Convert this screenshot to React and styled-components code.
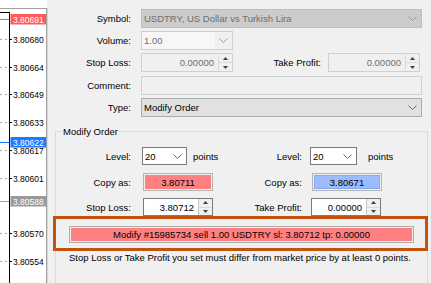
import React from 'react';
import styled, { createGlobalStyle } from 'styled-components';

const GlobalStyle = createGlobalStyle`
  body {
    margin: 0;
    background: #f0f0f0;
    font-family: "Liberation Sans", Arial, sans-serif;
    font-size: 9.5px;
    color: #000;
  }
`;

const Window = styled.div`
  display: flex;
  width: 431px;
  height: 283px;
  overflow: hidden;
  background: #f0f0f0;
`;

const ChartPane = styled.svg`
  flex: 0 0 49px;
  width: 49px;
  height: 283px;
  display: block;
  overflow: visible;
`;

const Dialog = styled.div`
  flex: 1;
  display: flex;
  flex-direction: column;
  padding-top: 9px;
`;

const Row = styled.div`
  display: flex;
  align-items: center;
  height: 19px;
  margin-bottom: ${p => p.mb ?? 3}px;
`;

const Label = styled.span`
  flex: 0 0 ${p => p.w ?? 82}px;
  text-align: right;
  margin-right: ${p => p.gap ?? 10}px;
  white-space: nowrap;
`;

const Field = styled.div`
  box-sizing: border-box;
  display: flex;
  align-items: center;
  width: ${p => p.w}px;
  height: ${p => p.h ?? 19}px;
  border: 1px solid ${p => (p.enabled ? '#7a7a7a' : '#d0d0d0')};
  background: ${p => p.bg ?? '#f0f0f0'};
  color: ${p => (p.enabled ? '#000' : '#6d6d6d')};
  padding-left: 2px;
  margin-left: ${p => p.ml ?? 0}px;
  overflow: hidden;
  white-space: nowrap;
`;

const Value = styled.span`
  flex: 1;
  text-align: ${p => p.align ?? 'left'};
  padding-right: ${p => (p.align === 'right' ? 4 : 0)}px;
`;

const Chevron = styled.span`
  flex: 0 0 17px;
  display: flex;
  align-items: center;
  justify-content: center;
  align-self: stretch;
  background: ${p => p.bg ?? 'transparent'};
`;

const Spin = styled.div`
  flex: 0 0 13px;
  align-self: stretch;
  display: flex;
  flex-direction: column;
  border-left: 1px solid ${p => (p.enabled ? '#c8c8c8' : '#dcdcdc')};
  background: #f0f0f0;
`;

const SpinHalf = styled.div`
  flex: 1;
  display: flex;
  align-items: center;
  justify-content: center;
  border-bottom: ${p => (p.top ? '1px solid #dcdcdc' : 'none')};
`;

const ColorBox = styled.div`
  box-sizing: border-box;
  width: 70px;
  height: 18px;
  margin-left: ${p => p.ml ?? 0}px;
  border: 1px solid #b4b4b4;
  padding: 1px;
  display: flex;
`;

const ColorFill = styled.div`
  flex: 1;
  background: ${p => p.color};
  display: flex;
  align-items: center;
  justify-content: center;
  border: 1px solid ${p => p.edge};
`;

const Group = styled.fieldset`
  margin: 9px 3px 0 6px;
  padding: 0;
  border: 1px solid #dcdcdc;
  border-bottom: none;
  min-width: 0;
  flex: 1;
  display: flex;
  flex-direction: column;
`;

const Legend = styled.legend`
  margin-left: 6px;
  padding: 0 1px;
`;

const GroupRow = styled.div`
  display: flex;
  align-items: center;
  height: 18px;
  margin-top: ${p => p.mt ?? 8}px;
`;

const Half = styled.div`
  display: flex;
  align-items: center;
  flex: 0 0 ${p => p.w}px;
`;

const Unit = styled.span`
  margin-left: 6px;
`;

const Highlight = styled.div`
  margin: 0 -1px 0 -3px;
  border: 3px solid #c4520f;
  height: 17px;
  box-sizing: content-box;
  padding: 7px 11px 5px 13px;
`;

const ModifyButton = styled.div`
  box-sizing: border-box;
  height: 17px;
  border: 1px solid #adadad;
  padding: 1px;
  display: flex;
`;

const ButtonFace = styled.div`
  flex: 1;
  background: #ff8080;
  display: flex;
  align-items: center;
  justify-content: center;
  white-space: nowrap;
`;

const Note = styled.div`
  margin: 1px 0 0 13px;
  white-space: nowrap;
`;

const ChevronIcon = ({ color = '#6a6a6a' }) => (
  <svg width="9" height="5" viewBox="0 0 9 5">
    <polyline points="0.5,0.5 4.5,4.5 8.5,0.5" fill="none" stroke={color} strokeWidth="1" />
  </svg>
);

const Arrow = ({ up }) => (
  <svg width="5" height="3" viewBox="0 0 5 3">
    <polygon points={up ? '0,3 5,3 2.5,0' : '0,0 5,0 2.5,3'} fill="#404040" />
  </svg>
);

const Spinner = ({ enabled }) => (
  <Spin enabled={enabled}>
    <SpinHalf top>
      <Arrow up />
    </SpinHalf>
    <SpinHalf>
      <Arrow />
    </SpinHalf>
  </Spin>
);

const ticks = [
  { y: 39, v: '3.80680' },
  { y: 67, v: '3.80664' },
  { y: 94, v: '3.80649' },
  { y: 122, v: '3.80633' },
  { y: 150, v: '3.80617' },
  { y: 178, v: '3.80601' },
  { y: 233, v: '3.80570' },
  { y: 261, v: '3.80554' },
];

const marks = [
  { y: 19, v: '3.80691', bg: '#ff5a5a', line: '#ff5a5a' },
  { y: 142, v: '3.80622', bg: '#1e7bff', line: '#1e7bff' },
  { y: 201, v: '3.80588', bg: '#9a9a9a', line: '#a0a0a0' },
];

const labelFont = 'Liberation Sans, Arial, sans-serif';

const Chart = () => (
  <ChartPane width="49" height="283" viewBox="0 0 49 283">
    <rect x="0" y="0" width="47" height="283" fill="#fff" />
    <line x1="0" y1="8.5" x2="47" y2="8.5" stroke="#a0a0a0" />
    <line x1="46.5" y1="8" x2="46.5" y2="283" stroke="#a0a0a0" />
    <line x1="47.5" y1="8" x2="47.5" y2="283" stroke="#d8d8d8" />
    <line x1="0" y1="12.5" x2="9.5" y2="12.5" stroke="#000" />
    <line x1="9.5" y1="12" x2="9.5" y2="283" stroke="#000" />
    {ticks.map(t => (
      <g key={t.v}>
        <line x1="0" y1={t.y + 0.5} x2="8" y2={t.y + 0.5} stroke="#a8a8a8" strokeDasharray="2 3" />
        <line x1="9" y1={t.y + 0.5} x2="12" y2={t.y + 0.5} stroke="#000" />
        <text x="13" y={t.y + 3.5} fontSize="8.5" fontFamily={labelFont} fill="#000">
          {t.v}
        </text>
      </g>
    ))}
    {marks.map(m => (
      <g key={m.v}>
        <line x1="0" y1={m.y + 0.5} x2="9" y2={m.y + 0.5} stroke={m.line} />
        <rect x="10.5" y={m.y - 5} width="35.5" height="10.5" fill={m.bg} />
        <text x="13" y={m.y + 3.5} fontSize="8.5" fontFamily={labelFont} fill="#fff">
          {m.v}
        </text>
      </g>
    ))}
  </ChartPane>
);

export default function App() {
  return (
    <>
      <GlobalStyle />
      <Window>
        <Chart />
        <Dialog>
          <Row>
            <Label>Symbol:</Label>
            <Field w={281} bg="#cccccc" style={{ borderColor: '#bfbfbf' }}>
              <Value>USDTRY, US Dollar vs Turkish Lira</Value>
              <Chevron>
                <ChevronIcon color="#9a9a9a" />
              </Chevron>
            </Field>
          </Row>
          <Row>
            <Label>Volume:</Label>
            <Field w={92} bg="#f7f7f7">
              <Value>1.00</Value>
              <Chevron bg="#f0f0f0">
                <ChevronIcon color="#a0a0a0" />
              </Chevron>
            </Field>
          </Row>
          <Row mb={4}>
            <Label>Stop Loss:</Label>
            <Field w={92} style={{ paddingLeft: 0 }}>
              <Value align="right">0.00000</Value>
              <Spinner />
            </Field>
            <Label w={88} gap={7}>Take Profit:</Label>
            <Field w={92} style={{ paddingLeft: 0 }}>
              <Value align="right">0.00000</Value>
              <Spinner />
            </Field>
          </Row>
          <Row>
            <Label>Comment:</Label>
            <Field w={281} />
          </Row>
          <Row mb={0}>
            <Label>Type:</Label>
            <Field w={281} enabled bg="#e1e1e1" style={{ borderColor: '#adadad' }}>
              <Value>Modify Order</Value>
              <Chevron>
                <ChevronIcon />
              </Chevron>
            </Field>
          </Row>
          <Group>
            <Legend>Modify Order</Legend>
            <GroupRow mt={10}>
              <Half w={171}>
                <Label w={75} gap={11}>Level:</Label>
                <Field w={45} h={18} enabled bg="#fff">
                  <Value>20</Value>
                  <Chevron>
                    <ChevronIcon />
                  </Chevron>
                </Field>
                <Unit>points</Unit>
              </Half>
              <Half w={180}>
                <Label w={75} gap={8}>Level:</Label>
                <Field w={47} h={18} enabled bg="#fff">
                  <Value>20</Value>
                  <Chevron>
                    <ChevronIcon />
                  </Chevron>
                </Field>
                <Unit style={{ marginLeft: 11 }}>points</Unit>
              </Half>
            </GroupRow>
            <GroupRow>
              <Half w={171}>
                <Label w={75} gap={11}>Copy as:</Label>
                <ColorBox ml={1}>
                  <ColorFill color="#ff8080" edge="#ff8080">3.80711</ColorFill>
                </ColorBox>
              </Half>
              <Half w={180}>
                <Label w={75} gap={8}>Copy as:</Label>
                <ColorBox ml={2}>
                  <ColorFill color="#9cbcff" edge="#86a8f0">3.80671</ColorFill>
                </ColorBox>
              </Half>
            </GroupRow>
            <GroupRow mt={7}>
              <Half w={171}>
                <Label w={75} gap={11}>Stop Loss:</Label>
                <Field w={70} h={18} enabled bg="#fff" ml={1} style={{ paddingLeft: 0 }}>
                  <Value align="right">3.80712</Value>
                  <Spinner enabled />
                </Field>
              </Half>
              <Half w={180}>
                <Label w={75} gap={8}>Take Profit:</Label>
                <Field w={70} h={18} enabled bg="#fff" ml={1} style={{ paddingLeft: 0 }}>
                  <Value align="right">0.00000</Value>
                  <Spinner enabled />
                </Field>
              </Half>
            </GroupRow>
            <Highlight>
              <ModifyButton>
                <ButtonFace>Modify #15985734 sell 1.00 USDTRY sl: 3.80712 tp: 0.00000</ButtonFace>
              </ModifyButton>
            </Highlight>
            <Note>Stop Loss or Take Profit you set must differ from market price by at least 0 points.</Note>
          </Group>
        </Dialog>
      </Window>
    </>
  );
}
